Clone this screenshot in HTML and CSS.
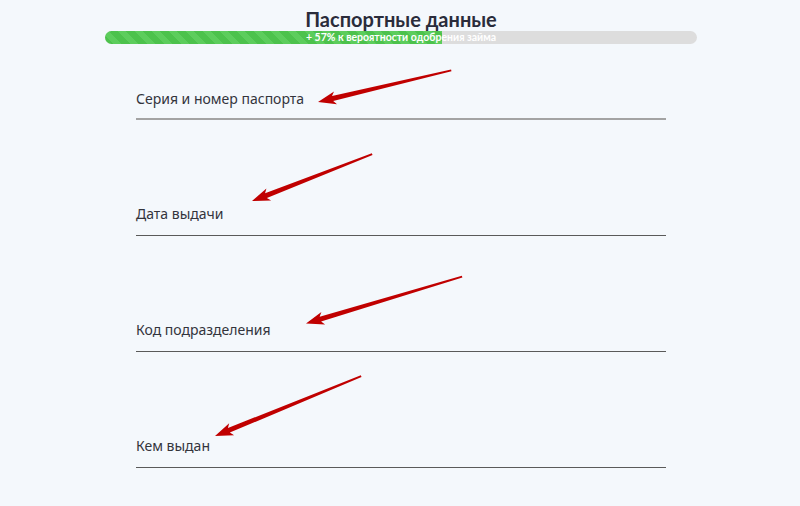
FILE: index.html
```html
<!DOCTYPE html>
<html lang="ru">
<head>
<meta charset="utf-8">
<title>Паспортные данные</title>
<link rel="stylesheet" href="styles.css">
</head>
<body>
<div class="page">
  <header class="head">
    <h1 class="title">Паспортные данные</h1>
    <div class="progress">
      <div class="progress-fill" style="width:57%"></div>
      <span class="progress-text">+ 57% к вероятности одобрения займа</span>
    </div>
  </header>
  <form class="form">
    <label class="field field-first"><span class="label">Серия и номер паспорта</span></label>
    <label class="field"><span class="label">Дата выдачи</span></label>
    <label class="field"><span class="label">Код подразделения</span></label>
    <label class="field"><span class="label">Кем выдан</span></label>
  </form>
  <svg class="arrows" width="800" height="506" viewBox="0 0 800 506">
    <g fill="#c00000">
      <polygon transform="translate(318 102) rotate(-13.4)" points="0,0 18,-6.5 15,-2.5 137,-0.9 137,0.9 15,2.5 18,6.5"/>
      <polygon transform="translate(252 201) rotate(-21.3)" points="0,0 18,-6.5 15,-2.5 129,-0.9 129,0.9 15,2.5 18,6.5"/>
      <polygon transform="translate(306 323.5) rotate(-16.7)" points="0,0 18,-6.5 15,-2.5 163,-0.9 163,0.9 15,2.5 18,6.5"/>
      <polygon transform="translate(215 436) rotate(-22.3)" points="0,0 18,-6.5 15,-2.5 158,-0.9 158,0.9 15,2.5 18,6.5"/>
    </g>
  </svg>
</div>
</body>
</html>
```
FILE: styles.css
```css
html, body {
  margin: 0;
  padding: 0;
}
body {
  background: #f4f8fc;
  font-family: "Noto Sans", "Open Sans", sans-serif;
  color: #2b2d3a;
}
.page {
  position: relative;
  width: 800px;
  height: 506px;
  overflow: hidden;
}
.head {
  width: 592px;
  margin-left: 105px;
  padding-top: 7px;
}
.title {
  margin: 0;
  font-family: Lato, "Noto Sans", sans-serif;
  font-size: 20px;
  line-height: 24px;
  font-weight: 700;
  text-align: center;
  color: #2a2c3b;
}
.progress {
  position: relative;
  margin-top: 0;
  height: 13px;
  border-radius: 6.5px;
  background: #dddddd;
  overflow: hidden;
}
.progress-fill {
  height: 100%;
  background: repeating-linear-gradient(45deg, #4cc24c 0, #4cc24c 6px, #5ccd5c 6px, #5ccd5c 12px);
}
.progress-text {
  position: absolute;
  left: 0;
  right: 0;
  top: 0;
  text-align: center;
  font-family: Lato, "Noto Sans", sans-serif;
  font-size: 10.5px;
  line-height: 13px;
  font-weight: 700;
  color: #ffffff;
}
.form {
  width: 530px;
  margin-left: 136px;
  display: flex;
  flex-direction: column;
}
.field {
  display: block;
  padding-top: 84px;
  padding-bottom: 11px;
  border-bottom: 1px solid #5a5a5a;
}
.field-first {
  padding-top: 45px;
  padding-bottom: 9px;
  border-bottom: 2px solid #a3a3a3;
}
.label {
  display: block;
  font-size: 14px;
  line-height: 20px;
  color: #33343c;
}
.arrows {
  position: absolute;
  left: 0;
  top: 0;
  pointer-events: none;
}
```
